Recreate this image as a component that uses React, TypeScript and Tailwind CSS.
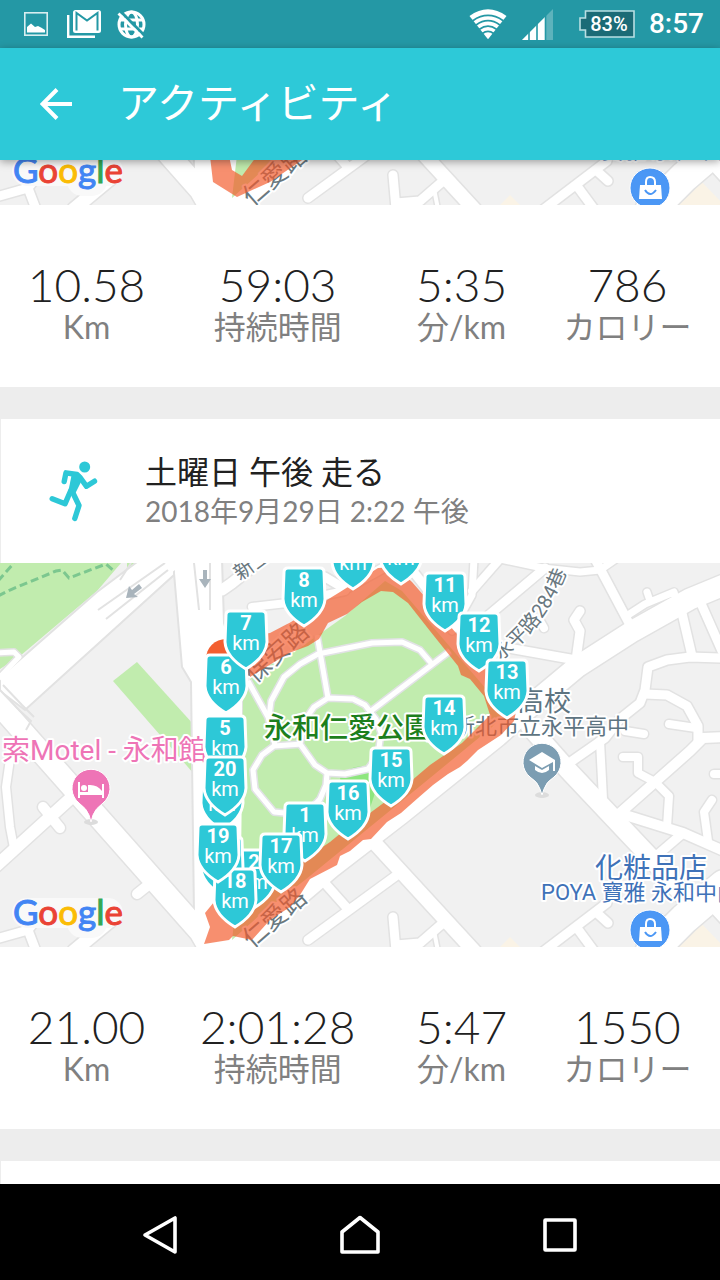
// ===== ACTIVITY FEED SCREEN =====
import React from 'react';

const JP = "font-[Roboto,'Noto_Sans_CJK_JP',sans-serif]";
const LIGHT = "font-[Lato,'Noto_Sans_CJK_JP',sans-serif]";

interface Marker {
  km: number;
  x: number;
  y: number;
}

interface Activity {
  id: string;
  distance: string;
  duration: string;
  pace: string;
  calories: string;
}

const FIRST: Activity = { id: 'a1', distance: '10.58', duration: '59:03', pace: '5:35', calories: '786' };
const SECOND: Activity = { id: 'a2', distance: '21.00', duration: '2:01:28', pace: '5:47', calories: '1550' };

const MARKERS: Marker[] = [
  { km: 1, x: 305, y: 239 },
  { km: 2, x: 254, y: 286 },
  { km: 3, x: 222, y: 273 },
  { km: 4, x: 222, y: 208 },
  { km: 5, x: 225, y: 152 },
  { km: 6, x: 226, y: 91 },
  { km: 7, x: 246, y: 47 },
  { km: 8, x: 304, y: 4 },
  { km: 9, x: 353, y: -33 },
  { km: 10, x: 401, y: -38 },
  { km: 11, x: 445, y: 9 },
  { km: 12, x: 479, y: 49 },
  { km: 13, x: 507, y: 96 },
  { km: 14, x: 444, y: 132 },
  { km: 15, x: 391, y: 184 },
  { km: 16, x: 348, y: 217 },
  { km: 17, x: 281, y: 270 },
  { km: 18, x: 235, y: 305 },
  { km: 19, x: 218, y: 260 },
  { km: 20, x: 225, y: 193 },
];

// [path, width]
const ROADS: [string, number][] = [
  ['M-6 136L200 369L212 390', 21],
  ['M-4 303L72 234', 12],
  ['M43 244L60 265', 10],
  ['M137 331L152 319', 10],
  ['M10 196L6 224L10 264L14 285', 8],
  ['M-4 376L28 367L43 348M28 367L36 388', 9],
  ['M74 388L110 358', 13],
  ['M-4 90L14 89L19 94L-4 118', 5],
  ['M222 27L232 20L262 -4', 11],
  ['M252 44L287 40L345 28', 8],
  ['M325 14L345 26L385 4', 9],
  ['M474 -4L472 32L452 68', 7],
  ['M500 -4L472 28', 8],
  ['M545 5L470 68', 9],
  ['M500 -4L543 5L580 9L600 7L616 -4', 7],
  ['M595 -4L630 62', 9],
  ['M405 -2L430 30L460 66', 9],
  ['M724 22L690 36L633 68L577 104L535 139L497 173L400 251L330 305L235 386', 21],
  ['M647 29L650 38M628 52L645 41L674 29L676 36', 7],
  ['M580 48L574 57L580 68L576 97L508 85', 9],
  ['M540 58L544 65', 8],
  ['M682 50L692 93', 9],
  ['M699 36L722 88', 9],
  ['M724 95L690 94L667 97L648 104L645 127L640 140L620 156L605 175L572 198', 9],
  ['M600 178L603 236', 8],
  ['M645 131L667 132L687 143L698 163L698 178', 9],
  ['M669 161L696 165', 8],
  ['M625 168L644 171', 8],
  ['M724 174L703 175L690 188L620 250', 10],
  ['M623 194L638 194L638 210L655 219L669 233L667 264', 8],
  ['M530 164L568 207L652 296L690 340', 18],
  ['M622 251L683 270L724 288', 10],
  ['M712 237L704 249L708 278', 8],
  ['M714 211L724 211', 8],
  ['M683 270L655 294', 9],
  ['M724 322L684 356L650 390', 30],
  ['M607 340L544 388', 9],
  ['M577 365L594 388M597 350L608 360', 9],
  ['M372 277L474 388', 14],
  ['M323 318L347 345M397 312L308 377', 9],
  ['M393 354L396 388M443 360L420 380L396 382', 9],
  ['M434 368L438 388', 4],
  ['M700 330L724 356', 10],
];

const PARK_PATHS = [
  'M317 72L328 135',
  'M269 154L271 138L284 114L300 101L318 91L372 80L402 79L420 87L432 101',
  'M371 148L450 88',
  'M328 135L353 136L365 142L376 156L381 170L378 192L368 206L345 211L327 210L315 202L300 181L304 158L314 144Z',
  'M302 181L274 183L262 192L253 207L255 226L274 249L305 252L320 236L326 222L327 210',
  'M248 118L268 154L275 182',
];

const ROUTE_LONG =
  'M246 74L270 70L291 59L340 29L378 5L396 4L412 19L426 35L456 70L500 107L520 130L514 158L501 172L478 187L467 198L460 204L448 211L433 222L418 235L401 250L387 259L371 276L363 277L350 288L340 293L337 302L310 316L300 332L290 344L270 357L252 377L233 373L229 377L204 381L210 364L205 350L214 339L240 336L262 322L290 306L330 279L347 265L370 250L397 230L430 202L462 180L490 152L484 133L470 116L461 112L458 103L430 68L408 40L393 29L381 28L362 39L347 51L328 60L319 76L308 83L289 90L250 114Z';
const ROUTE_SHORT =
  'M208 318L213 361L237 376L270 361L330 320L262 328L242 355L232 349L228 330Z';

const HALO = { stroke: '#fff', strokeWidth: 4, strokeLinejoin: 'round' as const, paintOrder: 'stroke' };

// Basemap shared by every activity card
function BaseMap({ laneId }: { laneId: string }) {
  return (
    <>
      <rect width="720" height="384" fill="#f1f1f1" />
      <path d="M0 0H121L97 28L20 93L0 106ZM127 12L141 0H127Z" fill="#c1ecae" />
      <path d="M113 118L137 99L194 162V211Z" fill="#c1ecae" />
      <path d="M510 374L496 388H524ZM697 356L668 388H728ZM710 350L724 336V364Z" fill="#faf3e6" />
      <g fill="none" stroke="#7cc78f" strokeWidth="3" strokeDasharray="8 4">
        <path d="M-2 33L10 27L56 8L62 7L69 15L106 1L114 8" />
        <path d="M-2 18L14 0" />
      </g>

      {/* Road casings go first, white fill on top */}
      <g fill="none" stroke="#e2e2e2" strokeLinecap="round" strokeLinejoin="round">
        {ROADS.map(([d, w]) => (
          <path key={d} d={d} strokeWidth={w + 3} />
        ))}
      </g>
      <g fill="#fff" stroke="#e2e2e2" strokeWidth="2">
        <path d="M141 -4L97 29L0 114V128L25 147L174 12L175 -4Z" />
        <path d="M174 -4L174 10L182 104L191 119L194 352L204 390H260L243 330L243 130L236 100L224 60L222 -4Z" />
      </g>
      <g fill="none" stroke="#fff" strokeLinecap="round" strokeLinejoin="round">
        {ROADS.map(([d, w]) => (
          <path key={d} d={d} strokeWidth={w} />
        ))}
        <path d="M140 24L178 -4" strokeWidth="14" />
      </g>
      <g fill="none" stroke="#e2e2e2" strokeWidth="2">
        <path d="M98 47L165 0M106 56L168 7M120 17L131 0M194 0L199 47M210 0V47" />
        <path d="M0 127L19 147L31 158L26 167M3 122L22 142L34 154" />
      </g>

      {/* Park */}
      <path d="M243 134L252 112L300 85L345 53L385 18L402 28L505 148L492 164L430 215L305 317L262 350L232 377L241 300Z" fill="#c1ecae" />
      <path d="M340 215Q346 204 362 203Q376 204 380 215L370 245L352 262Z" fill="#8ee67e" />
      <g fill="none" strokeLinejoin="round">
        {PARK_PATHS.map((d) => (
          <path key={d} d={d} stroke="#e2e2e6" strokeWidth="8" />
        ))}
        {PARK_PATHS.map((d) => (
          <path key={d} d={d} stroke="#fff" strokeWidth="5" />
        ))}
      </g>

      <g fill="#a9b4bc">
        <path d="M139 21L142 25L134 31L138 34L126 35L129 23L132 27Z" />
        <path d="M203 7H207V16H211L205 25L199 16H203Z" />
      </g>

      <g fill="#69787f" {...HALO} className={JP}>
        <text transform="translate(240 18) rotate(-36)" fontSize="20">新生路</text>
        <text transform="translate(255 121) rotate(-42)" fontSize="25">保安路</text>
        <text transform="translate(252 386) rotate(-41)" fontSize="25">仁愛路</text>
        <path id={laneId} d="M499 98Q548 64 569 2" fill="none" stroke="none" />
        <text fontSize="20">
          <textPath href={`#${laneId}`}>永平路284巷</textPath>
        </text>
      </g>

      <g {...HALO} className={JP}>
        <text x="2" y="197" fontSize="28" fill="#ee74b6">索Motel - 永和館</text>
        <text x="264" y="175" fontSize="28" fontWeight="500" fill="#1d7f1d">永和仁愛公園</text>
        <text x="517" y="148" fontSize="27" fill="#5e7481">高校</text>
        <text x="453" y="171" fontSize="22" fill="#5e7481">新北市立永平高中</text>
        <text x="595" y="315" fontSize="28" fill="#3f72b8">化粧品店</text>
        <text x="541" y="337" fontSize="22" fill="#3f72b8">POYA 寶雅 永和中山</text>
      </g>

      {/* Motel pin */}
      <ellipse cx="91" cy="259" rx="7" ry="3" fill="#dcdcdc" />
      <path d="M91 259L89 252Q87 246 79 240A19 19 0 1 1 103 240Q95 246 93 252Z" fill="#ee74b6" stroke="#fff" />
      <path d="M78 219H80V229H88V222Q97 221 102 228V221H104V235H102V232H80V235H78Z" fill="#fff" />
      <circle cx="84" cy="225" r="3" fill="#fff" />

      {/* School pin */}
      <ellipse cx="542" cy="232" rx="7" ry="3" fill="#dcdcdc" />
      <path d="M542 232L540 226Q538 219 530 214A19 19 0 1 1 554 214Q546 219 544 226Z" fill="#7c9db2" stroke="#fff" />
      <path d="M529 197L542 189L555 197V208H553V199L542 205ZM535 203L542 207L549 203V207Q542 213 535 207Z" fill="#fff" />

      {/* Shop pin */}
      <circle cx="650" cy="367" r="20" fill="#4b97f5" stroke="#fff" />
      <path d="M640 364H661L662 378H639Z" fill="#fff" />
      <path d="M646 364V361Q646 356 650 356Q655 356 655 361V364" fill="none" stroke="#fff" strokeWidth="2" />
      <path d="M645 369Q650 377 656 369" fill="none" stroke="#4b97f5" strokeWidth="2" />
    </>
  );
}

function GoogleMark() {
  return (
    <g className="font-[Lato,sans-serif]" fontSize="35">
      <path d="M27 350H108M82 360H92" stroke="#f9f9f9" strokeWidth="30" strokeLinecap="round" />
      <text x="13" y="362">
        <tspan fill="#4285f4" stroke="#4285f4">G</tspan>
        <tspan fill="#ea4335" stroke="#ea4335">o</tspan>
        <tspan fill="#fbbc05" stroke="#fbbc05">o</tspan>
        <tspan fill="#4285f4" stroke="#4285f4">g</tspan>
        <tspan fill="#34a853" stroke="#34a853">l</tspan>
        <tspan fill="#ea4335" stroke="#ea4335">e</tspan>
      </text>
    </g>
  );
}

function KmMarker({ km, x, y }: Marker) {
  return (
    <g transform={`translate(${x} ${y})`} fill="#fff" textAnchor="middle" fontSize="20" className={JP}>
      <path
        d="M-16 1H16Q20 1 20 5L21 32Q20 47 0 59Q-20 47 -21 32L-20 5Q-20 1 -16 1Z"
        fill="#2dc8d7"
        stroke="#fff"
        strokeWidth="3"
      />
      <text y="20" fontWeight="700">{km}</text>
      <text y="40">km</text>
    </g>
  );
}

function RouteMap({ id, route, markers = [] }: { id: string; route: string; markers?: Marker[] }) {
  return (
    <svg viewBox="0 0 720 384" className="block h-auto w-full shrink-0" role="img" aria-label="ルート">
      <BaseMap laneId={`lane-${id}`} />
      <path d={route} fill="#f35a2b" fillOpacity="0.68" />
      {markers.length > 0 && <circle cx="226" cy="96" r="20" fill="#f35f30" />}
      {markers.map((m) => (
        <KmMarker key={m.km} {...m} />
      ))}
      <GoogleMark />
    </svg>
  );
}

function Stat({ value, label }: { value: string; label: string }) {
  return (
    <div className="flex flex-col items-center whitespace-nowrap">
      <dd className="text-[46px] leading-12 font-light text-[#212121]">{value}</dd>
      <dt className="order-last text-[32px] leading-9 text-[#808080]">{label}</dt>
    </div>
  );
}

function Stats({ activity }: { activity: Activity }) {
  return (
    <dl className={`grid grid-cols-[24fr_29fr_22fr_24fr] pt-14 pr-1.5 pb-[42px] ${LIGHT}`}>
      <Stat value={activity.distance} label="Km" />
      <Stat value={activity.duration} label="持続時間" />
      <Stat value={activity.pace} label="分/km" />
      <Stat value={activity.calories} label="カロリー" />
    </dl>
  );
}

function RunnerIcon() {
  return (
    <svg width="50" height="62" viewBox="0 0 50 62" className="shrink-0" aria-hidden="true">
      <circle cx="35.7" cy="7" r="5.5" fill="#2dc8d7" />
      <g fill="none" stroke="#2dc8d7" strokeWidth="5.4" strokeLinecap="round" strokeLinejoin="round">
        <path d="M15.2 21.5L17 12.8L28 14.5L31.5 18L37.5 26.3L45.5 21.2" />
        <path d="M22 30L16 43.8L3.2 38.8" />
        <path d="M23.5 32L30 45.5L25.8 58.5" />
      </g>
      <path d="M23 13L32 15L33 20L26 34L19 33Z" fill="#2dc8d7" />
    </svg>
  );
}

function StatusBar() {
  return (
    <div className={`flex h-12 shrink-0 items-center bg-[#2498a5] pr-4 pl-6 text-white ${JP}`}>
      <svg width="24" height="24" viewBox="0 0 24 24" aria-hidden="true">
        <rect x="0.8" y="0.8" width="22.4" height="22.4" fill="none" stroke="#d8eef0" strokeWidth="1.6" />
        <path d="M3 20V15L7 11.5L11 15L14 14L17 15.5L21 18V20.5H3Z" fill="#fff" />
      </svg>
      <svg width="34" height="28" viewBox="0 0 34 28" className="ml-[19px]" aria-hidden="true">
        <path d="M1.2 5V26.8H28" fill="none" stroke="#fff" strokeWidth="2.4" />
        <rect x="6" y="0" width="28" height="23" rx="2.5" fill="#fff" />
        <path d="M9.5 20.5V3L20 10.5L30.5 3V20.5" fill="none" stroke="#2498a5" strokeWidth="2" />
      </svg>
      <svg width="29" height="29" viewBox="0 0 29 29" className="ml-4" aria-hidden="true">
        <g fill="none" stroke="#fff" strokeWidth="3">
          <circle cx="14.5" cy="14.5" r="12.5" />
          <ellipse cx="14.5" cy="14.5" rx="6" ry="12.5" />
          <path d="M2.5 10H26.5M2.5 19H26.5" />
        </g>
        <path d="M3 1L28 26" stroke="#2498a5" strokeWidth="3" />
        <path d="M1.5 3.5L25.5 27.5" stroke="#fff" strokeWidth="2.8" />
      </svg>

      <svg width="38" height="32" viewBox="0 0 40 32" className="ml-auto" aria-hidden="true">
        <path d="M0.5 7.5Q20 -6.5 39.5 7.5L20 32Z" fill="#fff" />
        <g fill="none" stroke="#2498a5" strokeWidth="1.8">
          <path d="M4 12.5Q20 1.5 36 12.5" />
          <path d="M7.5 17Q20 8 32.5 17" />
          <path d="M11 21.5Q20 15 29 21.5" />
          <path d="M14 26Q20 21.5 26 26" />
        </g>
      </svg>
      <svg width="31" height="31" viewBox="0 0 31 31" className="ml-[15px]" aria-hidden="true">
        <path d="M31 0V31H0Z" fill="#5db3bc" />
        <path d="M23 8V31H0Z" fill="#fff" />
        <path d="M7 20V31M15 12V31M23.5 5V31" stroke="#2498a5" strokeWidth="1.6" />
      </svg>
      <div className="relative ml-[26px]">
        <svg width="56" height="28" viewBox="0 0 56 28" className="block" aria-hidden="true">
          <path d="M6.5 1H55V27H6.5V20H1V8H6.5Z" fill="#1b6b76" stroke="#b9dfe3" strokeWidth="1.6" />
        </svg>
        <span className="absolute inset-y-0 right-0 left-1 text-center text-[20px] leading-7 font-medium">83%</span>
      </div>
      <time className="ml-[14px] text-[28px] leading-8 font-medium">8:57</time>
    </div>
  );
}

function AppBar() {
  return (
    <header className={`relative z-10 flex h-28 shrink-0 items-center bg-[#2dc9d8] pl-10 text-white shadow-[0_2px_8px_rgba(0,0,0,0.35)] ${JP}`}>
      <button type="button" aria-label="戻る">
        <svg width="32" height="32" viewBox="0 0 32 32" className="block">
          <path d="M32 16H3M17 1.5L2.5 16L17 30.5" fill="none" stroke="#fff" strokeWidth="4" />
        </svg>
      </button>
      <h1 className="ml-[46px] text-[41px] leading-12">アクティビティ</h1>
    </header>
  );
}

function NavBar() {
  return (
    <nav className="grid h-24 shrink-0 grid-cols-3 bg-black px-15 pt-1.5">
      <button type="button" aria-label="戻る" className="flex items-center justify-center">
        <svg width="36" height="40" viewBox="0 0 36 40">
          <path d="M33 3V37L3 20Z" fill="none" stroke="#fff" strokeWidth="3.6" strokeLinejoin="round" />
        </svg>
      </button>
      <button type="button" aria-label="ホーム" className="flex items-center justify-center">
        <svg width="40" height="40" viewBox="0 0 40 40">
          <path d="M2 37V17L20 2.5L38 17V37Z" fill="none" stroke="#fff" strokeWidth="3.6" strokeLinejoin="round" />
        </svg>
      </button>
      <button type="button" aria-label="最近" className="flex items-center justify-center">
        <svg width="34" height="34" viewBox="0 0 34 34">
          <rect x="2" y="2" width="30" height="30" rx="0.5" fill="none" stroke="#fff" strokeWidth="3.6" />
        </svg>
      </button>
    </nav>
  );
}

export default function App() {
  return (
    <div className="flex h-screen flex-col overflow-hidden bg-[#ededed]">
      <StatusBar />
      <AppBar />

      <main className="flex min-h-0 flex-1 flex-col overflow-hidden">
        <article className="shrink-0 bg-white">
          {/* Only the bottom strip of this map is scrolled into view */}
          <div className="flex h-[45px] items-end overflow-hidden">
            <RouteMap id={FIRST.id} route={ROUTE_SHORT} />
          </div>
          <Stats activity={FIRST} />
        </article>

        <article className="mt-8 shrink-0 bg-white">
          <div className="flex h-36 items-center border-l border-[#ededed] pl-12">
            <RunnerIcon />
            <div className="ml-[46px]">
              <h2 className={`text-[32px] leading-10 text-[#212121] ${JP}`}>土曜日 午後 走る</h2>
              <p className={`text-[28px] leading-9 text-[#808080] ${LIGHT}`}>2018年9月29日 2:22 午後</p>
            </div>
          </div>
          <RouteMap id={SECOND.id} route={ROUTE_LONG} markers={MARKERS} />
          <Stats activity={SECOND} />
        </article>

        <article className="mt-8 min-h-0 flex-1 border-l border-[#ededed] bg-white" />
      </main>

      <NavBar />
    </div>
  );
}
